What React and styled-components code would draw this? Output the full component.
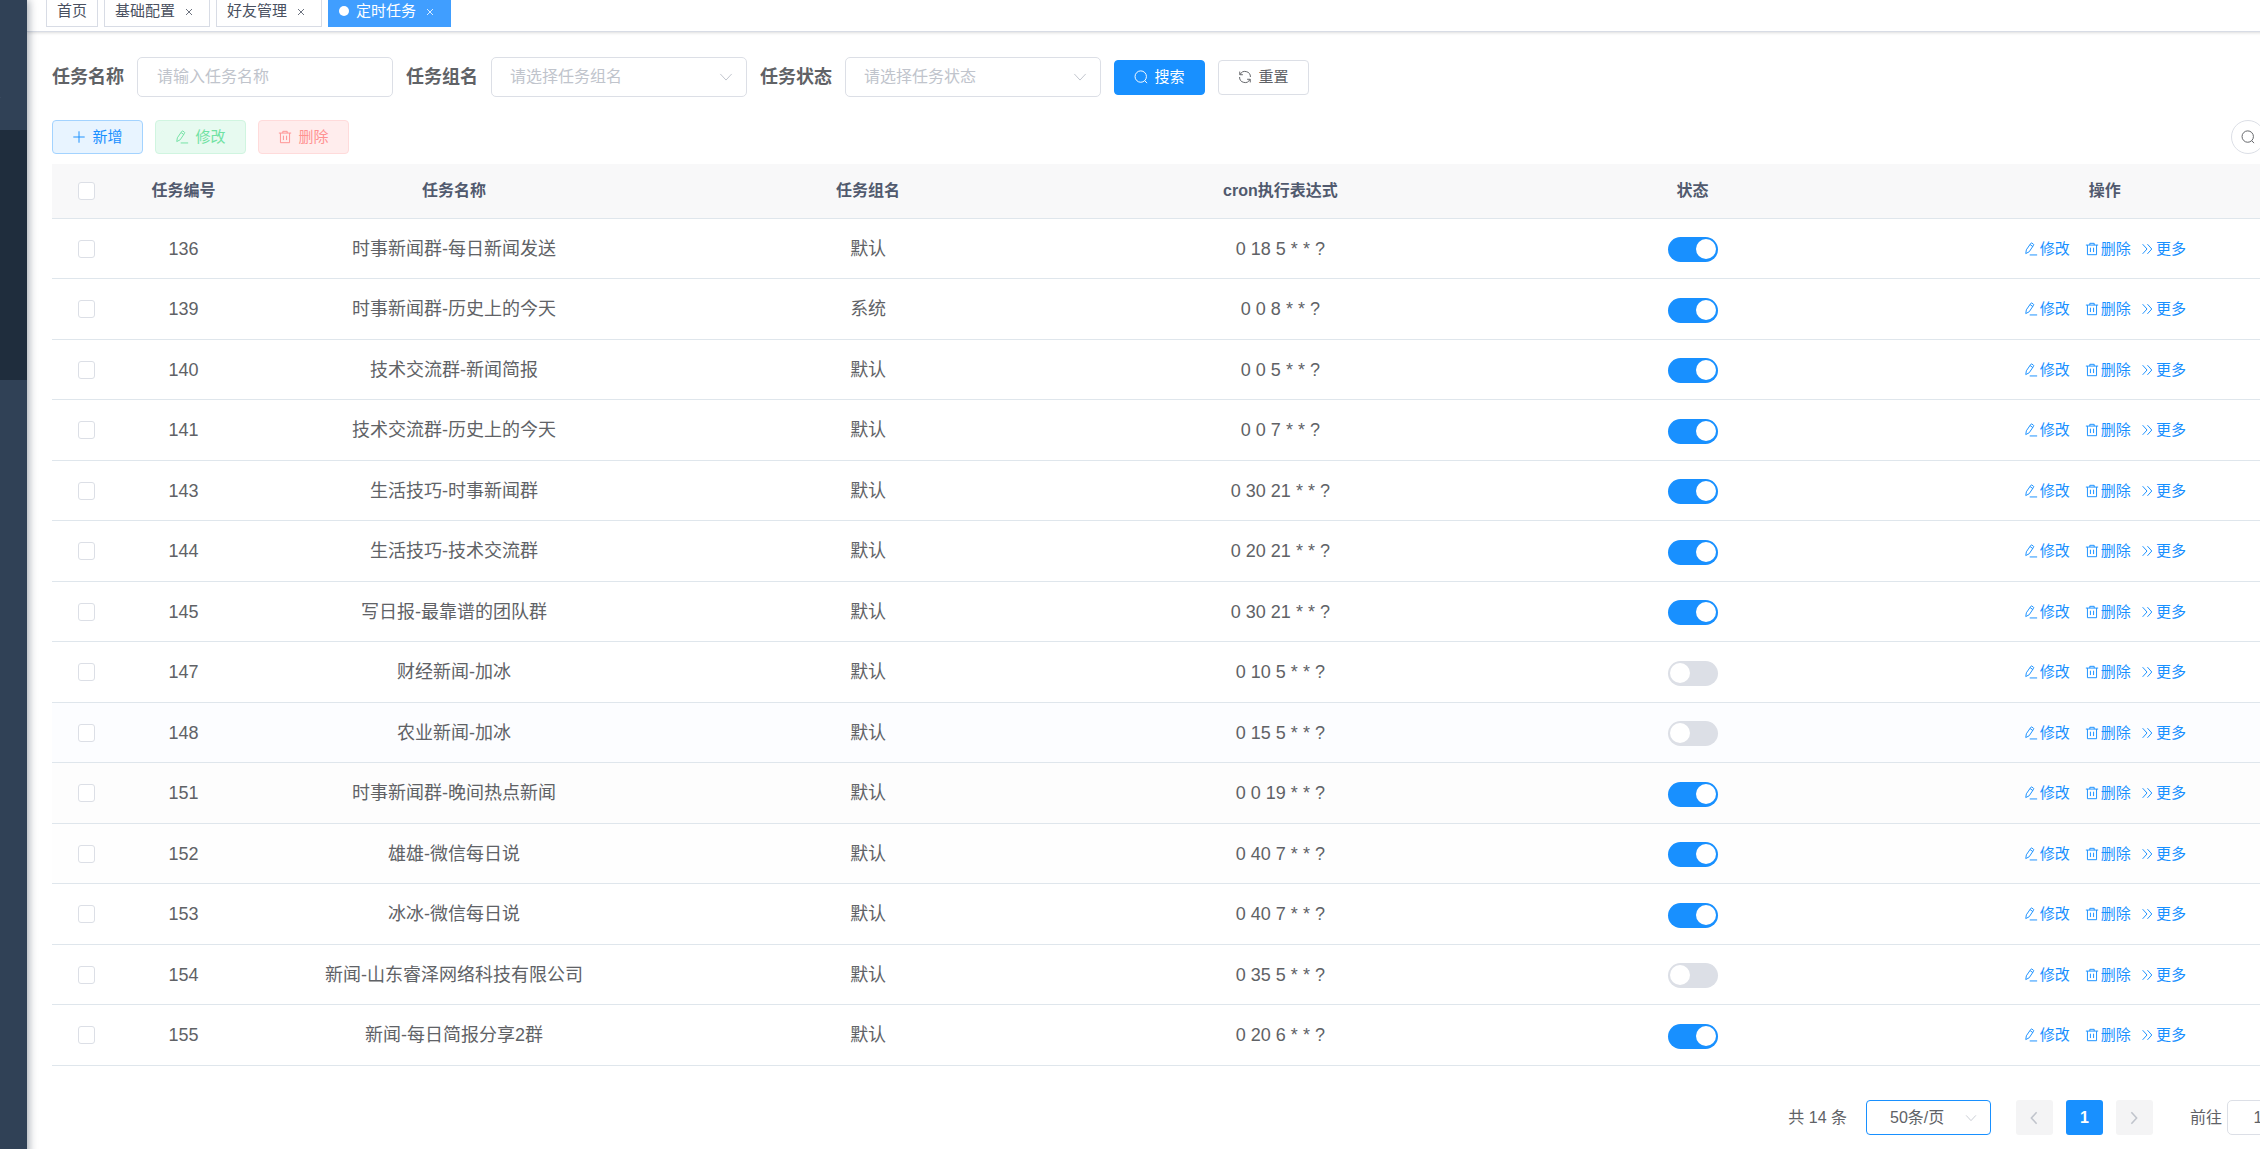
import React, { useState } from "react";
import styled, { createGlobalStyle, css } from "styled-components";

const tabs = [
  { title: "首页" },
  { title: "基础配置", closable: true },
  { title: "好友管理", closable: true },
  { title: "定时任务", closable: true, active: true },
];

const jobs = [
  { id: 136, name: "时事新闻群-每日新闻发送", group: "默认", cron: "0 18 5 * * ?", on: true },
  { id: 139, name: "时事新闻群-历史上的今天", group: "系统", cron: "0 0 8 * * ?", on: true },
  { id: 140, name: "技术交流群-新闻简报", group: "默认", cron: "0 0 5 * * ?", on: true },
  { id: 141, name: "技术交流群-历史上的今天", group: "默认", cron: "0 0 7 * * ?", on: true },
  { id: 143, name: "生活技巧-时事新闻群", group: "默认", cron: "0 30 21 * * ?", on: true },
  { id: 144, name: "生活技巧-技术交流群", group: "默认", cron: "0 20 21 * * ?", on: true },
  { id: 145, name: "写日报-最靠谱的团队群", group: "默认", cron: "0 30 21 * * ?", on: true },
  { id: 147, name: "财经新闻-加冰", group: "默认", cron: "0 10 5 * * ?", on: false },
  { id: 148, name: "农业新闻-加冰", group: "默认", cron: "0 15 5 * * ?", on: false, tint: "#fcfdff" },
  { id: 151, name: "时事新闻群-晚间热点新闻", group: "默认", cron: "0 0 19 * * ?", on: true, tint: "#fdfdfd" },
  { id: 152, name: "雄雄-微信每日说", group: "默认", cron: "0 40 7 * * ?", on: true, tint: "#fefefe" },
  { id: 153, name: "冰冰-微信每日说", group: "默认", cron: "0 40 7 * * ?", on: true },
  { id: 154, name: "新闻-山东睿泽网络科技有限公司", group: "默认", cron: "0 35 5 * * ?", on: false },
  { id: 155, name: "新闻-每日简报分享2群", group: "默认", cron: "0 20 6 * * ?", on: true },
];

const paths = {
  plus: "M8 1.5v13M1.5 8h13",
  edit: "M2 13.2l.7-4.3 5-7.3q.6-.8 1.4-.3l1.6 1.1q.8.6.2 1.4l-5 7.4L2 13.2M7 3l3.3 2.3M6.5 14.8H15",
  trash: "M1 3.5h14M5.5 3.5v-2h5v2M2.8 3.5v11h10.4v-11M6.2 6.5v5M9.8 6.5v5",
  more: "M3 2.5L8 8l-5 5.5M8.5 2.5L13.5 8l-5 5.5",
  down: "M1.5 4.5L8 11.5l6.5-7",
  up: "M1.5 11.5L8 4.5l6.5 7",
  prev: "M11 1.5L5 8l6 6.5",
  next: "M5 1.5L11 8l-6 6.5",
  close: "M2 2l12 12M14 2L2 14",
  search: "M7.7 1a6.5 6.5 0 1 0 0 13 6.5 6.5 0 0 0 0-13M12.3 12.2l2.6 2.8",
  refresh: "M2 1.8v3.6h3.6M2.4 5.2A6.2 6.2 0 0 1 14.2 8M14 14.2v-3.6h-3.6M13.6 10.8A6.2 6.2 0 0 1 1.8 8",
};

function Icon({ name, size = 14, stroke = 1.1 }) {
  return (
    <Glyph width={size} height={size} viewBox="0 0 16 16" strokeWidth={stroke} aria-hidden="true">
      <path d={paths[name]} />
    </Glyph>
  );
}

function Dropdown({ id, label, placeholder }) {
  return (
    <Field>
      <Label htmlFor={id}>{label}</Label>
      <SelectBox>
        <Select id={id} defaultValue="">
          <option value="">{placeholder}</option>
        </Select>
        <Arrow>
          <Icon name="down" size={14} />
        </Arrow>
      </SelectBox>
    </Field>
  );
}

function JobRow({ job }) {
  const [on, setOn] = useState(job.on);
  return (
    <Row $tint={job.tint}>
      <td>
        <Checkbox aria-label={`选择 ${job.id}`} />
      </td>
      <td>{job.id}</td>
      <td>{job.name}</td>
      <td>{job.group}</td>
      <td>{job.cron}</td>
      <td>
        <Switch checked={on} onChange={() => setOn(!on)} aria-label={`状态 ${job.id}`} />
      </td>
      <td>
        <Actions>
          <TextButton>
            <Icon name="edit" />
            修改
          </TextButton>
          <TextButton>
            <Icon name="trash" />
            删除
          </TextButton>
          <TextButton $tight>
            <Icon name="more" />
            更多
          </TextButton>
        </Actions>
      </td>
    </Row>
  );
}

function App() {
  return (
    <>
      <GlobalStyle />
      <Page>
        <Sidebar>
          <SubmenuTitle>
            <Icon name="up" size={12} stroke={1.4} />
          </SubmenuTitle>
          <Submenu />
        </Sidebar>
        <Main>
          <TabsBar>
            {tabs.map((tab) => (
              <Tab key={tab.title} href="#" $active={tab.active}>
                {tab.active && <Dot />}
                {tab.title}
                {tab.closable && (
                  <Close>
                    <Icon name="close" size={8} stroke={1.6} />
                  </Close>
                )}
              </Tab>
            ))}
          </TabsBar>
          <Content>
            <SearchForm onSubmit={(e) => e.preventDefault()}>
              <Field>
                <Label htmlFor="jobName">任务名称</Label>
                <Input id="jobName" placeholder="请输入任务名称" />
              </Field>
              <Dropdown id="jobGroup" label="任务组名" placeholder="请选择任务组名" />
              <Dropdown id="jobStatus" label="任务状态" placeholder="请选择任务状态" />
              <Button type="submit" $kind="primary">
                <Icon name="search" />
                搜索
              </Button>
              <Button type="reset">
                <Icon name="refresh" />
                重置
              </Button>
            </SearchForm>

            <Toolbar>
              <Button type="button" $kind="add">
                <Icon name="plus" />
                新增
              </Button>
              <Button type="button" $kind="edit" disabled>
                <Icon name="edit" />
                修改
              </Button>
              <Button type="button" $kind="remove" disabled>
                <Icon name="trash" />
                删除
              </Button>
              <ToolbarRight>
                <RoundButton aria-label="搜索">
                  <Icon name="search" />
                </RoundButton>
                <RoundButton aria-label="刷新">
                  <Icon name="refresh" />
                </RoundButton>
              </ToolbarRight>
            </Toolbar>

            <Table>
              <colgroup>
                <Col $width={69} />
                <Col $width={125} />
                <Col $width={416} />
                <col span="4" />
              </colgroup>
              <thead>
                <tr>
                  <th>
                    <Checkbox aria-label="全选" />
                  </th>
                  <th>任务编号</th>
                  <th>任务名称</th>
                  <th>任务组名</th>
                  <th>cron执行表达式</th>
                  <th>状态</th>
                  <th>操作</th>
                </tr>
              </thead>
              <tbody>
                {jobs.map((job) => (
                  <JobRow key={job.id} job={job} />
                ))}
              </tbody>
            </Table>

            <Pagination>
              <Total>共 14 条</Total>
              <PageSize>
                <SizeSelect aria-label="每页条数">
                  <option>50条/页</option>
                </SizeSelect>
                <Arrow>
                  <Icon name="down" size={12} />
                </Arrow>
              </PageSize>
              <Pager>
                <PageButton disabled aria-label="上一页">
                  <Icon name="prev" stroke={1.8} />
                </PageButton>
                <PageButton $active>1</PageButton>
                <PageButton disabled aria-label="下一页">
                  <Icon name="next" stroke={1.8} />
                </PageButton>
              </Pager>
              <Jump>
                前往
                <JumpInput defaultValue="1" />
              </Jump>
            </Pagination>
          </Content>
        </Main>
      </Page>
    </>
  );
}

const GlobalStyle = createGlobalStyle`
  * {
    box-sizing: border-box;
  }

  body {
    margin: 0;
    overflow: hidden;
    background: #fff;
    color: #606266;
  }

  body, button, input, select {
    font-family: "Liberation Sans", "Noto Sans CJK SC", sans-serif;
    line-height: 22px;
  }
`;

const Glyph = styled.svg`
  flex: none;
  fill: none;
  stroke: currentColor;
`;

const Page = styled.div`
  display: flex;
  min-height: 100vh;
  overflow: hidden;
`;

const Sidebar = styled.aside`
  flex: none;
  width: 27px;
  background: #304156;
  box-shadow: 2px 0 8px rgba(0, 21, 41, 0.35);
  z-index: 1;
`;

const SubmenuTitle = styled.div`
  display: flex;
  align-items: center;
  height: 130px;
  padding-top: 60px;
  margin-left: -11px;
  color: #bfcbd9;
`;

const Submenu = styled.div`
  height: 250px;
  background: #1f2d3d;
`;

/* the table is wider than the window, the rest runs off the right edge */
const Main = styled.main`
  flex: none;
  width: calc(100% + 49px);
`;

const TabsBar = styled.nav`
  display: flex;
  align-items: flex-end;
  gap: 6px;
  height: 32px;
  padding: 0 19px 4px;
  border-bottom: 1px solid #d8dce5;
  box-shadow: 0 1px 3px rgba(0, 0, 0, 0.12), 0 0 3px rgba(0, 0, 0, 0.04);
`;

const Tab = styled.a`
  display: flex;
  align-items: center;
  height: 32px;
  padding: 0 10px;
  border: 1px solid ${(p) => (p.$active ? "#409eff" : "#d8dce5")};
  background: ${(p) => (p.$active ? "#409eff" : "#fff")};
  color: ${(p) => (p.$active ? "#fff" : "#495060")};
  font-size: 15px;
  text-decoration: none;
`;

const Dot = styled.span`
  width: 10px;
  height: 10px;
  margin-right: 7px;
  border-radius: 50%;
  background: #fff;
`;

const Close = styled.span`
  display: flex;
  align-items: center;
  justify-content: center;
  width: 20px;
  height: 20px;
  padding-top: 2px;
  margin-left: 4px;
`;

const Content = styled.div`
  padding: 25px;
`;

const SearchForm = styled.form`
  display: flex;
  align-items: center;
  gap: 13px;
`;

const Field = styled.div`
  display: flex;
  align-items: center;
`;

const Label = styled.label`
  width: 85px;
  font-size: 18px;
  font-weight: 700;
`;

const control = css`
  border: 1px solid #dcdfe6;
  border-radius: 5px;
  outline: none;
  background: #fff;
  color: #606266;
  font-size: 16px;
`;

const Input = styled.input`
  ${control}
  width: 256px;
  height: 40px;
  padding: 0 19px;

  &::placeholder {
    color: #c0c4cc;
  }
`;

const SelectBox = styled.div`
  position: relative;
`;

const Select = styled.select`
  ${control}
  display: block;
  width: 256px;
  height: 40px;
  padding: 0 18px;
  appearance: none;
  color: #c0c4cc;
`;

const Arrow = styled.span`
  position: absolute;
  top: 0;
  right: 14px;
  display: flex;
  align-items: center;
  height: 100%;
  color: #c0c4cc;
  pointer-events: none;
`;

const kinds = {
  plain: css`
    height: 35px;
    border-color: #dcdfe6;
    background: #fff;
    color: #606266;
  `,
  primary: css`
    height: 35px;
    border-color: #1890ff;
    background: #1890ff;
    color: #fff;
  `,
  add: css`
    border-color: #a3d3ff;
    background: #e8f4ff;
    color: #1890ff;
  `,
  edit: css`
    border-color: #d0f5e0;
    background: #e7faf0;
    color: #71e2a3;
  `,
  remove: css`
    border-color: #ffdbdb;
    background: #ffeded;
    color: #ff9292;
  `,
};

const Button = styled.button`
  display: flex;
  align-items: center;
  justify-content: center;
  gap: 6px;
  width: 91px;
  height: 34px;
  padding: 0;
  border: 1px solid;
  border-radius: 4px;
  font-size: 15px;
  ${(p) => kinds[p.$kind || "plain"]}
`;

const Toolbar = styled.div`
  display: flex;
  gap: 12px;
  margin: 23px 0 10px;
`;

const ToolbarRight = styled.div`
  display: flex;
  gap: 12px;
  margin-left: auto;
`;

const RoundButton = styled.button`
  display: flex;
  align-items: center;
  justify-content: center;
  width: 34px;
  height: 34px;
  padding: 0;
  border: 1px solid #dcdfe6;
  border-radius: 50%;
  background: #fff;
  color: #606266;
`;

const Table = styled.table`
  width: 100%;
  table-layout: fixed;
  border-collapse: separate;
  border-spacing: 0;
  font-size: 18px;
  text-align: center;

  th {
    height: 55px;
    padding: 0;
    border-bottom: 1px solid #dfe6ec;
    background: #f8f8f9;
    color: #515a6e;
    font-size: 16px;
    font-weight: 700;
  }
`;

const Col = styled.col`
  width: ${(p) => p.$width}px;
`;

const Row = styled.tr`
  background: ${(p) => p.$tint || "#fff"};

  td {
    height: 60px;
    padding: 0;
    border-bottom: 1px solid #dfe6ec;
  }

  &:nth-child(even) td {
    height: 61px;
  }
`;

const Checkbox = styled.input.attrs({ type: "checkbox" })`
  display: block;
  width: 17px;
  height: 18px;
  margin: 0 auto;
  border: 1px solid #dcdfe6;
  border-radius: 3px;
  background: #fff;
  appearance: none;

  &:checked {
    border-color: #1890ff;
    background: #1890ff;
  }
`;

const Switch = styled.input.attrs({ type: "checkbox", role: "switch" })`
  display: block;
  width: 50px;
  height: 25px;
  margin: 2px auto 0;
  padding: 2px;
  border-radius: 13px;
  background: #dcdfe6;
  appearance: none;

  &::before {
    content: "";
    display: block;
    width: 20px;
    height: 20px;
    border-radius: 50%;
    background: #fff;
  }

  &:checked {
    background: #1890ff;
  }

  &:checked::before {
    margin-left: auto;
  }
`;

const Actions = styled.div`
  display: flex;
  justify-content: center;
`;

const TextButton = styled.button`
  display: flex;
  align-items: center;
  gap: 2px;
  padding: 0;
  margin-left: ${(p) => (p.$tight ? "9px" : "15px")};
  border: 0;
  background: none;
  color: #1890ff;
  font-size: 15px;

  &:first-child {
    margin-left: 0;
  }
`;

const Pagination = styled.div`
  display: flex;
  align-items: center;
  justify-content: flex-end;
  margin-top: 34px;
  padding-right: 22px;
  font-size: 16px;
`;

const Total = styled.span`
  margin-right: 19px;
`;

const PageSize = styled.div`
  position: relative;
  margin-right: 25px;
`;

const SizeSelect = styled.select`
  ${control}
  display: block;
  width: 125px;
  height: 35px;
  padding: 0 23px;
  border-color: #1890ff;
  border-radius: 4px;
  appearance: none;
`;

const Pager = styled.div`
  display: flex;
  gap: 13px;
`;

const PageButton = styled.button`
  display: flex;
  align-items: center;
  justify-content: center;
  width: 37px;
  height: 35px;
  padding: 0;
  border: 0;
  border-radius: 3px;
  background: ${(p) => (p.$active ? "#1890ff" : "#f4f4f5")};
  color: ${(p) => (p.$active ? "#fff" : "#c0c4cc")};
  font-size: 16px;
  font-weight: 700;
`;

const Jump = styled.label`
  display: flex;
  align-items: center;
  gap: 5px;
  margin-left: 37px;
`;

const JumpInput = styled.input`
  ${control}
  width: 62px;
  height: 35px;
  padding: 0;
  text-align: center;
`;

export default App;
